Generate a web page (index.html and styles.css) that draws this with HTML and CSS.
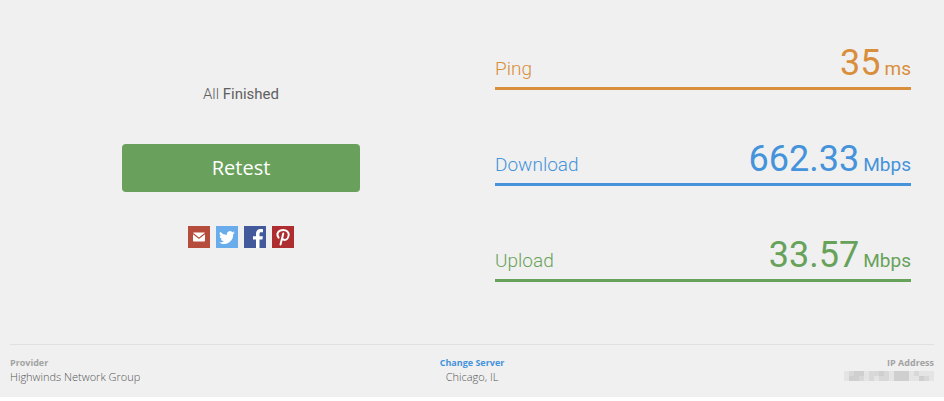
FILE: index.html
```html
<!DOCTYPE html>
<html lang="en">
<head>
<meta charset="utf-8">
<title>Speed Test</title>
<link rel="stylesheet" href="styles.css">
</head>
<body>
<div class="page">
  <main class="results">
    <section class="status">
      <p class="status-text">All <strong>Finished</strong></p>
      <button class="retest" type="button">Retest</button>
      <nav class="share" aria-label="Share">
        <a class="mail" href="#" aria-label="Email"><svg viewBox="0 0 22 22"><rect x="5" y="6.500" width="12" height="9" rx=".8" fill="#fff"/><path fill="none" stroke="#b64d3c" stroke-width="1.200" d="M5 7.500l6 4.800 6-4.800"/></svg></a>
        <a class="twitter" href="#" aria-label="Twitter"><svg viewBox="0 0 24 24"><path fill="#fff" d="M20.500 7.200a7 7 0 0 1-2 .6 3.500 3.500 0 0 0 1.500-2 7 7 0 0 1-2.200.9 3.500 3.500 0 0 0-6 3.200A10 10 0 0 1 4.600 6.200a3.500 3.500 0 0 0 1.100 4.700 3.500 3.500 0 0 1-1.600-.4 3.500 3.500 0 0 0 2.800 3.500 3.500 3.500 0 0 1-1.600.1 3.500 3.500 0 0 0 3.300 2.400 7 7 0 0 1-5.200 1.500A9.900 9.900 0 0 0 18.700 9.100a7 7 0 0 0 1.800-1.900z"/></svg></a>
        <a class="facebook" href="#" aria-label="Facebook"><svg viewBox="0 0 22 22"><path fill="#fff" d="M12 22v-8.500H9v-3.300h3V7.600C12 4.700 13.700 3 16.400 3c1.200 0 2.200.1 2.600.2v3h-1.800c-1.400 0-1.700.7-1.700 1.700v2.300h3.400l-.5 3.300h-2.900V22z"/></svg></a>
        <a class="pinterest" href="#" aria-label="Pinterest"><svg viewBox="0 0 22 22"><path fill="none" stroke="#fff" stroke-width="2" stroke-linecap="round" stroke-linejoin="round" d="M6.600 11.600C3.600 7.500 6.800 4 11.200 4c3.600 0 5.700 2.100 5.500 4.800-.2 3.200-2.200 5.100-4.200 5.100-1.200 0-2.100-.7-2.300-1.600M11.300 7.500 8.500 18.500"/></svg></a>
      </nav>
    </section>
    <section class="metrics">
      <div class="metric ping"><span class="label">Ping</span><span class="value">35</span><span class="unit">ms</span></div>
      <div class="metric download"><span class="label">Download</span><span class="value">662.33</span><span class="unit">Mbps</span></div>
      <div class="metric upload"><span class="label">Upload</span><span class="value">33.57</span><span class="unit">Mbps</span></div>
    </section>
  </main>
  <footer class="details">
    <div><b>Provider</b><span>Highwinds Network Group</span></div>
    <div class="server"><a href="#">Change Server</a><span>Chicago, IL</span></div>
    <div class="address"><b>IP Address</b>
      <svg class="mosaic" viewBox="0 0 18 2" preserveAspectRatio="none" shape-rendering="crispEdges" role="img" aria-label="Hidden address"><path fill="#e4e4e4" d="M0 0h18v2H0z"/><path fill="#cfcfcf" d="M2 0h2v1H2zM1 1h2v1H1zM7 0h1v1H7zM10 0h3v2h-3zM15 1h1v1h-1z"/><path fill="#d8d8d8" d="M1 0h1v1H1zM3 1h1v1H3zM5 0h2v1H5zM5 1h1v1H5zM7 1h2v1H7zM8 0h1v1H8zM14 0h1v1h-1zM16 1h1v1h-1z"/></svg>
    </div>
  </footer>
</div>
</body>
</html>
```
FILE: styles.css
```css
* { box-sizing: border-box; }
body { margin: 0; background: #fff; font-family: "Open Sans", sans-serif; }
.page { background: #f0f0f0; padding: 0 10px 14px; }
.results {
  display: grid;
  grid-template-columns: 462fr 439fr;
  padding-right: 23px;
  min-height: 344px;
}
.status { display: flex; flex-direction: column; align-items: center; padding-top: 84px; }
.status-text {
  margin: 0 0 40px;
  font: 300 15px/20px Roboto, sans-serif;
  color: #606060;
}
.status-text strong { font-weight: 400; }
.retest {
  width: 238px;
  height: 48px;
  border: 0;
  border-radius: 4px;
  background: #69a15c;
  color: #fff;
  font: 400 20px/24px "Open Sans", sans-serif;
}
.share { display: flex; gap: 6px; margin-top: 34px; }
.share a { width: 22px; height: 22px; }
.share svg { display: block; width: 100%; height: 100%; }
.mail { background: #b64d3c; }
.twitter { background: #68aceb; }
.facebook { background: #42599b; }
.pinterest { background: #ad2d30; }
.metrics { padding: 42px 0 0 23px; }
.metric {
  display: flex;
  align-items: baseline;
  gap: 4px;
  height: 48px;
  margin-bottom: 48px;
  border-bottom: 3px solid;
  font-family: Roboto, sans-serif;
  line-height: 42px;
}
.label { margin-right: auto; font-size: 19px; font-weight: 300; }
.value { font-size: 36px; }
.unit { font-size: 19px; }
.ping { color: #d98e3c; }
.download { color: #4593db; }
.upload { color: #67a25a; }
.details {
  display: grid;
  grid-template-columns: 1fr 1fr 1fr;
  border-top: 1px solid #e0e0e0;
  padding-top: 11px;
  font-size: 11px;
  font-weight: 300;
  line-height: 13px;
  color: #555;
}
.details b, .details a {
  display: block;
  font-size: 9px;
  line-height: 14px;
  font-weight: 700;
  text-decoration: none;
  color: #a3a3a3;
}
.details span { display: block; }
.details .server { text-align: center; }
.details .server a { color: #4593db; }
.address { text-align: right; }
.mosaic { display: block; width: 90px; height: 10px; margin: 1px 0 0 auto; }
```
